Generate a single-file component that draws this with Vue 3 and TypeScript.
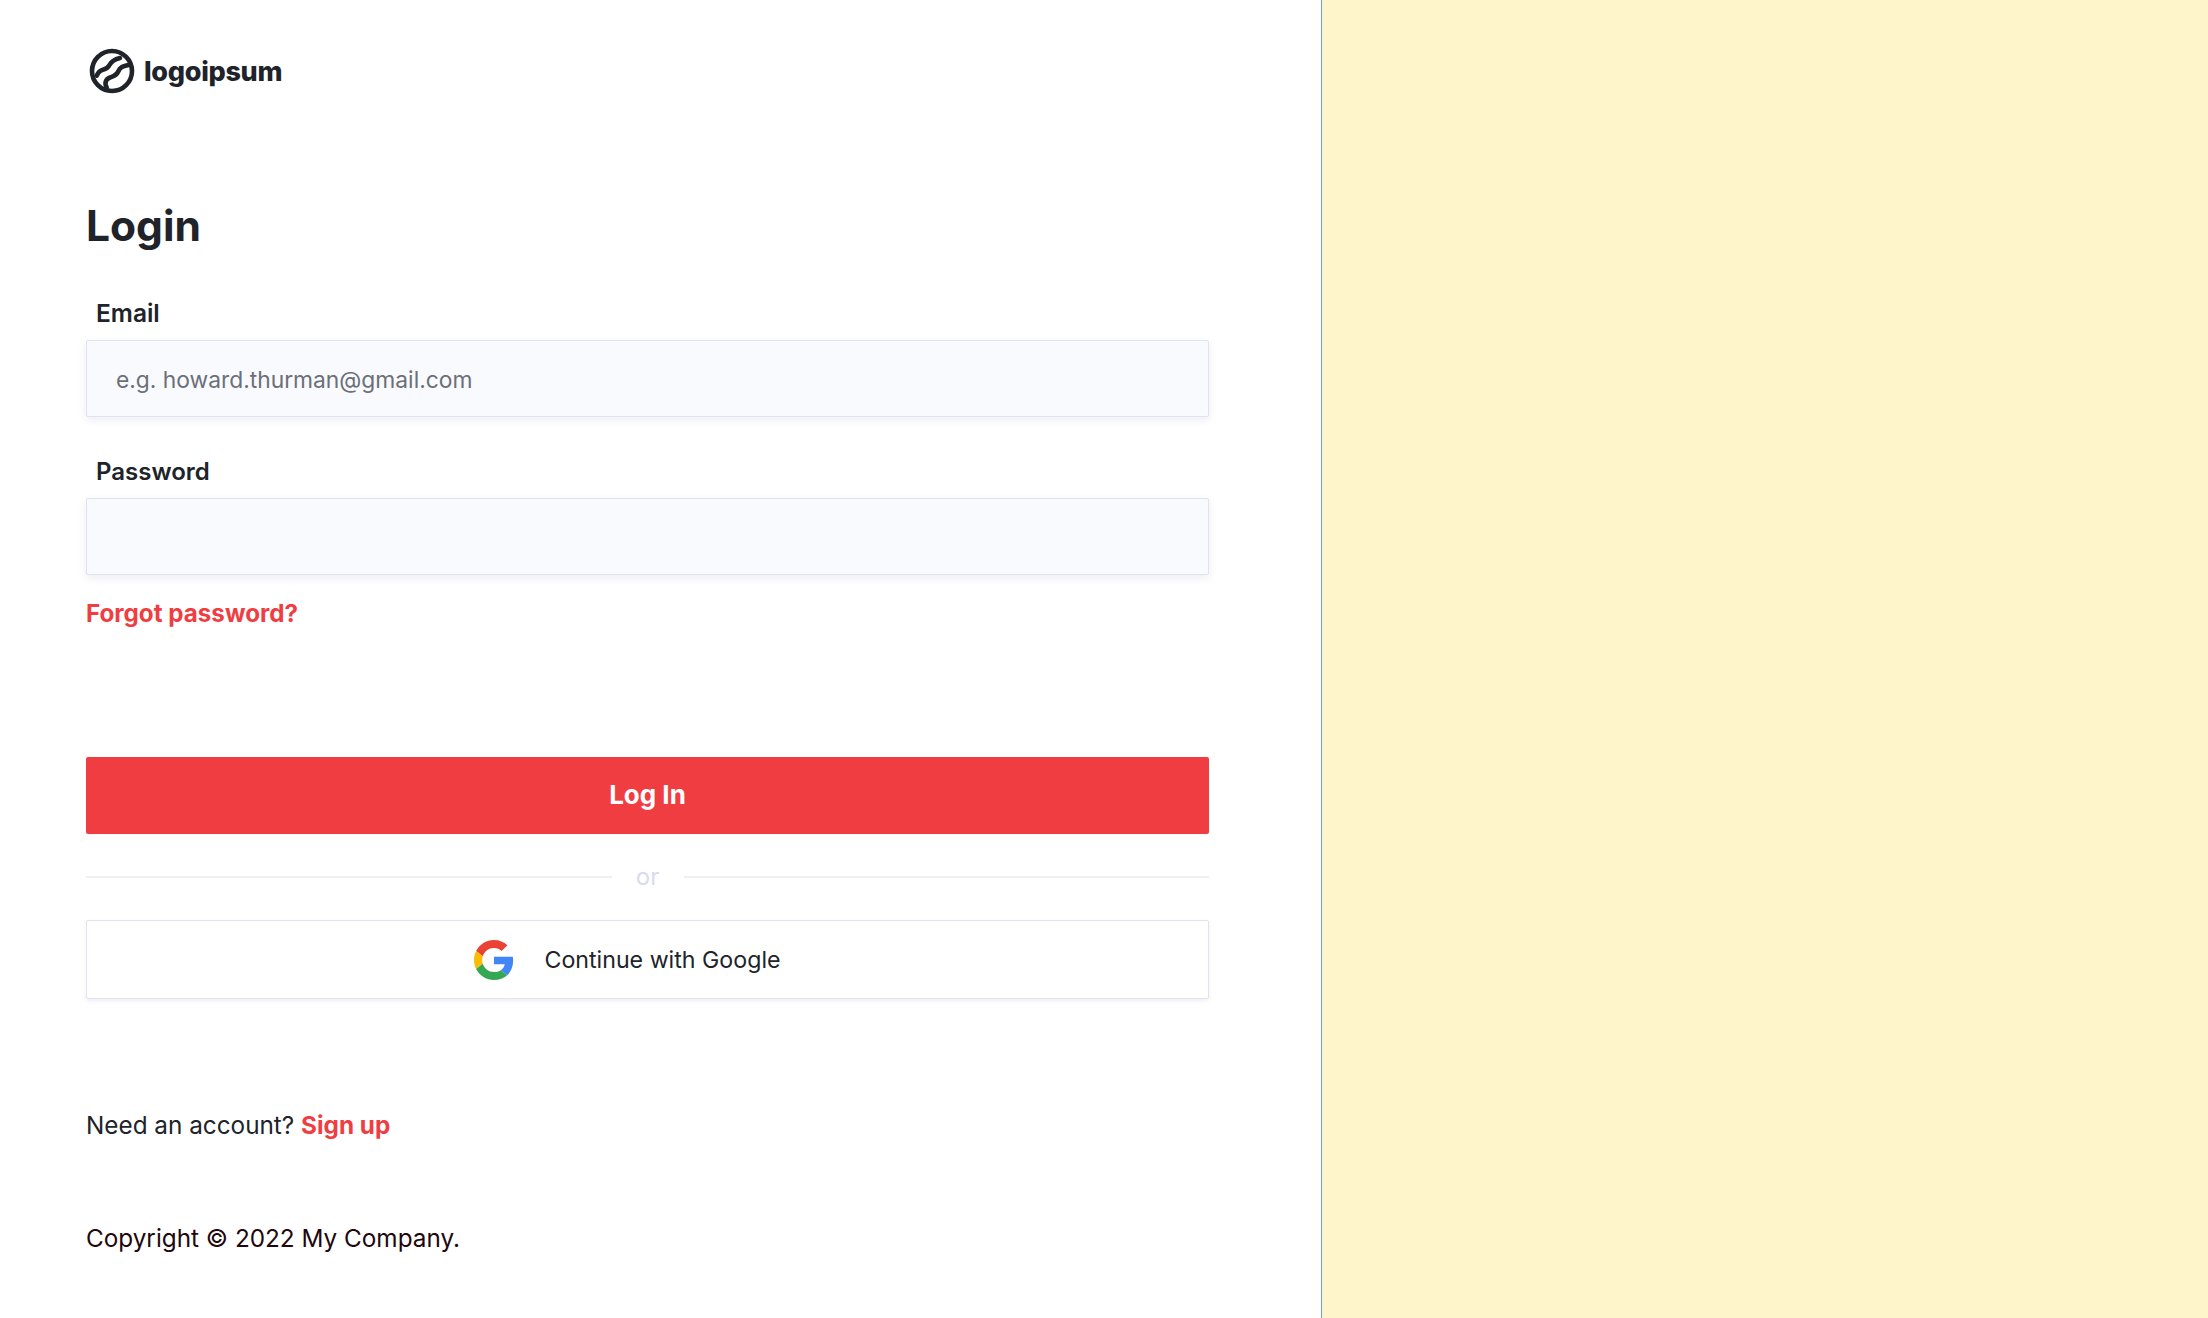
<script setup lang="ts">
const year = 2022
</script>

<template>
  <div class="page">
    <section class="left">
      <div class="logo">
        <svg width="46" height="46" viewBox="0 0 46 46" fill="none" stroke="#20232a" stroke-width="4.6" stroke-linecap="round">
          <circle cx="23" cy="23" r="20" />
          <path d="M7.7 27.7C9 24.5 11 22.5 14 21.7S19 20 20.5 17 25 11.5 31 10" />
          <path d="M17.7 39.5C15 35 17 31 21 29.5S27.5 27.5 29.5 23 34 18.5 39.5 17" />
        </svg>
        <span class="logo-text">logoipsum</span>
      </div>

      <h1>Login</h1>

      <label class="label">Email</label>
      <input class="field" type="text" placeholder="e.g. howard.thurman@gmail.com" />

      <label class="label second">Password</label>
      <input class="field" type="password" />

      <a class="forgot">Forgot password?</a>

      <button class="login">Log In</button>

      <div class="divider"><span class="line"></span><span class="or">or</span><span class="line"></span></div>

      <button class="google">
        <svg width="40" height="40" viewBox="0 0 48 48">
          <path fill="#EA4335" d="M24 9.5c3.54 0 6.71 1.22 9.21 3.6l6.85-6.85C35.9 2.38 30.47 0 24 0 14.62 0 6.51 5.38 2.56 13.22l7.98 6.19C12.43 13.72 17.74 9.5 24 9.5z" />
          <path fill="#4285F4" d="M46.98 24.55c0-1.57-.15-3.09-.38-4.55H24v9.02h12.94c-.58 2.96-2.26 5.48-4.78 7.18l7.73 6c4.51-4.18 7.09-10.36 7.09-17.65z" />
          <path fill="#FBBC05" d="M10.53 28.59c-.48-1.45-.76-2.99-.76-4.59s.27-3.14.76-4.59l-7.98-6.19C.92 16.46 0 20.12 0 24c0 3.88.92 7.54 2.56 10.78l7.97-6.19z" />
          <path fill="#34A853" d="M24 48c6.48 0 11.93-2.13 15.89-5.81l-7.73-6c-2.15 1.45-4.92 2.3-8.16 2.3-6.26 0-11.57-4.22-13.47-9.91l-7.98 6.19C6.51 42.62 14.62 48 24 48z" />
        </svg>
        <span>Continue with Google</span>
      </button>

      <p class="signup">Need an account? <a>Sign up</a></p>
      <p class="copyright">Copyright © {{ year }} My Company.</p>
    </section>
    <aside class="right"></aside>
  </div>
</template>

<style scoped>
.page {
  display: flex;
  height: 1318px;
  font-family: "Inter", "Liberation Sans", sans-serif;
  color: #20232a;
  background: #fff;
  overflow: hidden;
}

.left {
  box-sizing: border-box;
  padding: 47px 112px 0 86px;
  border-right: 1px solid #6f9fd8;
  flex: 0 0 1322px;
  display: flex;
  flex-direction: column;
  align-items: stretch;
}

.right {
  flex: 1;
  background: #fef5ca;
}

.logo {
  display: flex;
  align-items: center;
  gap: 9px;
  height: 48px;
  margin-left: 3px;
}

.logo-text {
  font-size: 27px;
  font-weight: 800;
  letter-spacing: -0.3px;
}

h1 {
  margin: 101px 0 0;
  font-size: 42.5px;
  line-height: 60px;
  font-weight: 700;
}

.label {
  margin: 41px 0 0 10px;
  font-size: 24.5px;
  line-height: 32px;
  font-weight: 600;
  height: 43px;
}

.label.second {
  margin-top: 39px;
  height: 42px;
  font-size: 24px;
}

.field {
  height: 77px;
  box-sizing: border-box;
  border: 1px solid #e0e2ec;
  border-radius: 2px;
  background: #f9fafe;
  padding: 1px 29px 0;
  font-family: inherit;
  font-size: 22.8px;
  box-shadow: 0 3px 8px rgba(120, 125, 170, 0.14);
  outline: none;
}

.field::placeholder {
  color: #6b7078;
}

.forgot {
  margin-top: 23px;
  font-size: 24.2px;
  line-height: 32px;
  font-weight: 700;
  color: #f03d42;
}

.login {
  margin-top: 127px;
  height: 77px;
  border: none;
  border-radius: 2px;
  background: #f03d42;
  color: #fff;
  font-family: inherit;
  font-size: 26px;
  font-weight: 700;
  padding-bottom: 3px;
}

.divider {
  margin-top: 26px;
  display: flex;
  align-items: center;
  height: 32px;
}

.line {
  flex: 1;
  height: 2px;
  margin-top: 2px;
  background: #eceef8;
}

.or {
  width: 72px;
  text-align: center;
  font-size: 24px;
  color: #d8dbeb;
}

.google {
  margin-top: 28px;
  height: 79px;
  box-sizing: border-box;
  border: 1px solid #e2e3ef;
  border-radius: 2px;
  background: #fff;
  box-shadow: 0 2px 4px rgba(120, 125, 170, 0.12);
  display: flex;
  align-items: center;
  justify-content: center;
  gap: 30px;
  padding: 0 40px 0 0;
  font-family: inherit;
  font-size: 23.2px;
  color: #20232a;
}

.signup {
  margin: 110px 0 0;
  font-size: 24.3px;
  line-height: 32px;
}

.signup a {
  font-weight: 700;
  color: #f03d42;
}

.copyright {
  margin: 81px 0 0;
  font-size: 24.3px;
  line-height: 32px;
  color: #22080c;
}
</style>
